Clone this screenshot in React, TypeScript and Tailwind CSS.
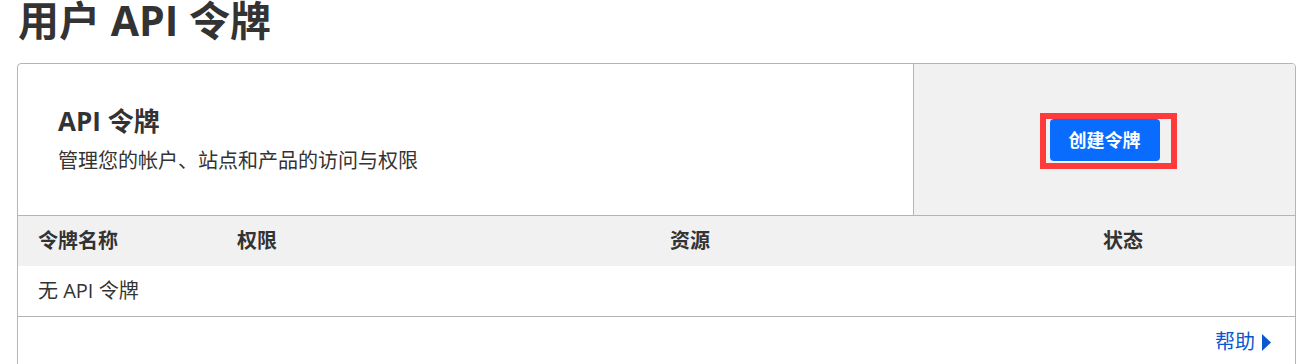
import React from 'react';

const FONT = "font-['Open_Sans','Noto_Sans_CJK_SC',sans-serif]";

const COLUMNS = ['令牌名称', '权限', '资源', '状态'];

function CreateTokenButton() {
  return (
    <div className="relative">
      <button className="h-[42px] w-[110px] rounded-[4px] bg-[#0a6cff] text-[18px] font-bold leading-[42px] text-white">
        创建令牌
      </button>
      {/* highlight annotation */}
      <div className="pointer-events-none absolute -top-[6px] -left-[10px] -right-[17px] -bottom-[8px] border-[6px] border-[#ff3a3a]" />
    </div>
  );
}

export default function App() {
  return (
    <div className={`${FONT} min-h-screen bg-white text-[#333]`}>
      <h1 className="pl-[18px] text-[41px] font-bold leading-[41px] mb-[22px]">用户 API 令牌</h1>

      <div className="ml-[17px] w-[1279px] rounded-[4px] border border-[#b5b5b5] overflow-hidden">
        {/* header panel */}
        <div className="flex h-[152px] border-b border-[#b5b5b5]">
          <div className="flex flex-1 flex-col justify-center pl-[40px]">
            <h2 className="text-[26px] font-bold leading-[32px]">API 令牌</h2>
            <p className="mt-[10px] text-[20px] leading-[28px]">管理您的帐户、站点和产品的访问与权限</p>
          </div>
          <div className="flex w-[382px] items-center justify-center border-l border-[#b5b5b5] bg-[#f1f1f1]">
            <CreateTokenButton />
          </div>
        </div>

        {/* table */}
        <div className="grid h-[50px] grid-cols-[199px_433px_433px_1fr] items-center bg-[#f1f1f1] text-[20px] font-bold">
          {COLUMNS.map(c => (
            <div key={c} className="pl-[20px]">{c}</div>
          ))}
        </div>
        <div className="flex h-[51px] items-center border-b border-[#b5b5b5] pl-[20px] text-[20px]">
          无 API 令牌
        </div>

        <div className="flex h-[50px] items-center justify-end pr-[24px]">
          <a href="#" className="flex items-center gap-[7px] text-[20px] text-[#0b57d0]">
            帮助
            <svg width="9" height="17" viewBox="0 0 9 17">
              <polygon points="0,0 9,8.5 0,17" fill="#0b57d0" />
            </svg>
          </a>
        </div>
      </div>
    </div>
  );
}
